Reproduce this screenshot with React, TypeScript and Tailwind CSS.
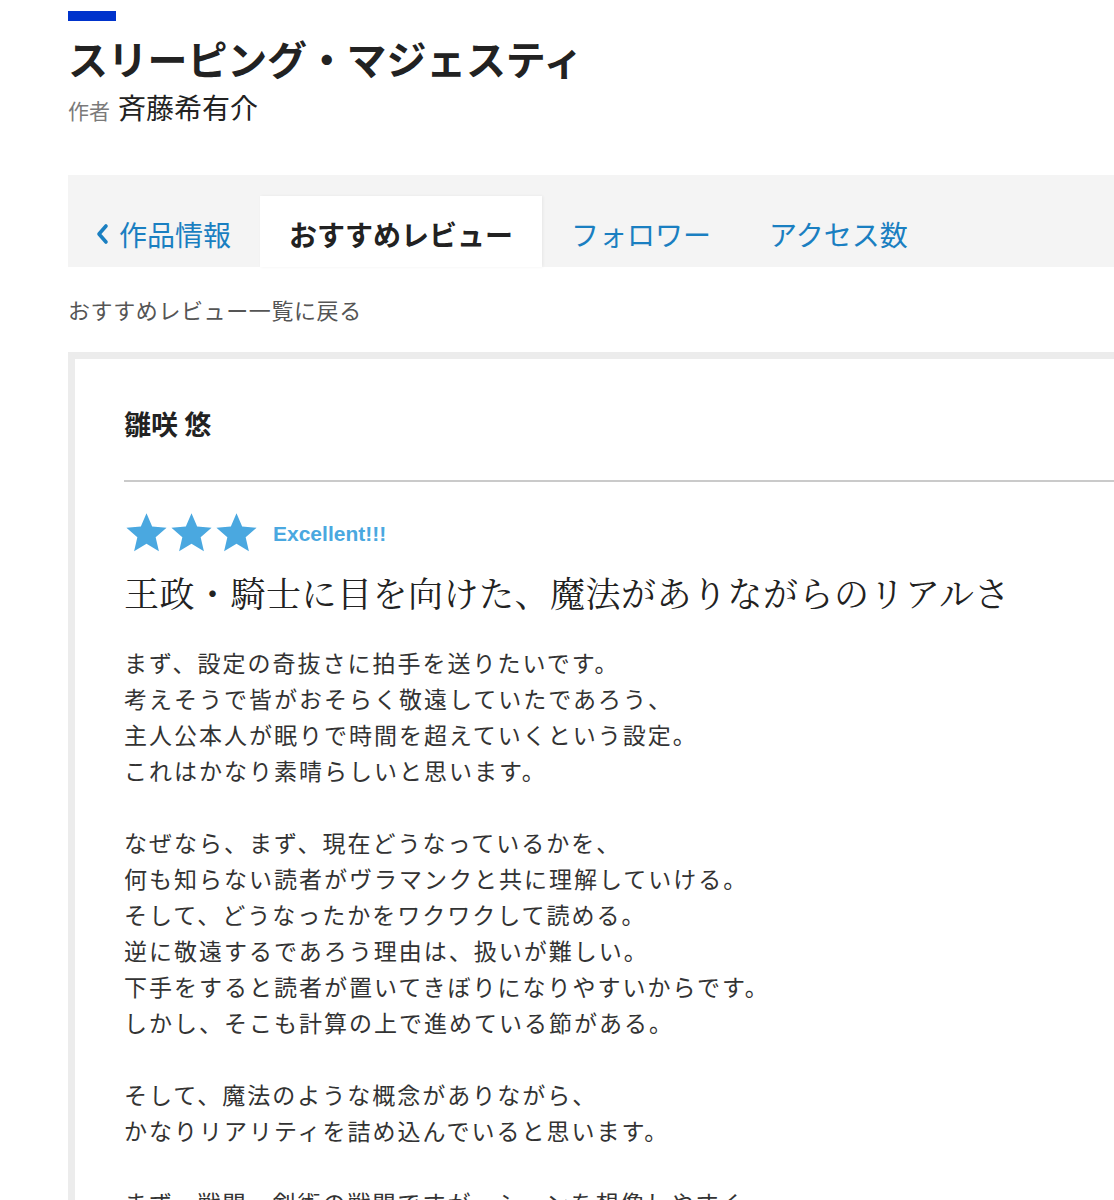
import React from "react";

const Star = () => (
  <svg width="45" height="44" viewBox="0 0 24 24" className="block">
    <path
      d="M12 1.2l3.09 7.26 7.86.68-5.96 5.17 1.78 7.69L12 17.92 5.23 22l1.78-7.69L1.05 9.14l7.86-.68z"
      fill="#4aa8e0"
    />
  </svg>
);

const paragraphs: string[][] = [
  [
    "まず、設定の奇抜さに拍手を送りたいです。",
    "考えそうで皆がおそらく敬遠していたであろう、",
    "主人公本人が眠りで時間を超えていくという設定。",
    "これはかなり素晴らしいと思います。",
  ],
  [
    "なぜなら、まず、現在どうなっているかを、",
    "何も知らない読者がヴラマンクと共に理解していける。",
    "そして、どうなったかをワクワクして読める。",
    "逆に敬遠するであろう理由は、扱いが難しい。",
    "下手をすると読者が置いてきぼりになりやすいからです。",
    "しかし、そこも計算の上で進めている節がある。",
  ],
  [
    "そして、魔法のような概念がありながら、",
    "かなりリアリティを詰め込んでいると思います。",
  ],
  ["まず、戦闘、剣術の戦闘ですが、シーンを想像しやすく"],
];

export default function App() {
  const sans = "font-['Noto_Sans_CJK_JP','Noto_Sans',sans-serif]";
  return (
    <div className={`min-h-[1200px] bg-white text-[#222] ${sans} overflow-hidden`}>
      <div className="pl-[68px]">
        {/* header */}
        <div className="pt-[11px]">
          <div className="w-[48px] h-[10px] bg-[#0033cc]" />
          <h1 className="mt-[13px] text-[40px] leading-[48px] font-bold text-[#222] tracking-[-0.2px]">
            スリーピング・マジェスティ
          </h1>
          <div className="mt-[4px] flex items-baseline h-[36px]">
            <span className="text-[21px] text-[#7a7a7a]">作者</span>
            <span className="ml-[8px] text-[28px] text-[#222]">斉藤希有介</span>
          </div>
        </div>

        {/* tabs */}
        <div className="mt-[53px] bg-[#f4f4f4] h-[92px] flex items-end">
          <div className="flex h-[71px]">
            <div className="flex items-center pl-[26px] pr-[29px] pt-[5px] text-[28px] text-[#1a7fc1]">
              <svg width="16" height="24" viewBox="0 0 16 24" className="mr-[9px]">
                <path d="M12 4L5 12l7 8" stroke="#1a7fc1" strokeWidth="3.6" fill="none" strokeLinecap="round" strokeLinejoin="round" />
              </svg>
              作品情報
            </div>
            <div className="flex items-center px-[29px] pt-[5px] bg-white text-[28px] font-bold text-[#222] shadow-[1px_0_3px_rgba(0,0,0,0.06)]">
              おすすめレビュー
            </div>
            <div className="flex items-center px-[29px] pt-[5px] text-[28px] text-[#1a7fc1]">
              フォロワー
            </div>
            <div className="flex items-center px-[29px] pt-[5px] text-[28px] text-[#1a7fc1]">
              アクセス数
            </div>
          </div>
        </div>

        <div className="mt-[26px] text-[22px] leading-[32px] tracking-[0.6px] text-[#555]">
          おすすめレビュー一覧に戻る
        </div>

        {/* card */}
        <div className="mt-[27px] border-t-[7px] border-l-[7px] border-[#ececec] bg-white pl-[49px]">
          <div className="pt-[49px] pb-[40px] text-[27px] leading-[32px] font-bold text-[#222]">
            雛咲 悠
          </div>
          <div className="border-t-2 border-[#cacaca]" />
          <div className="mt-[29px] flex items-center">
            <Star />
            <Star />
            <Star />
            <span className="ml-[14px] mt-[2px] text-[21px] font-bold text-[#4aa8e0] font-['Liberation_Sans',sans-serif]">
              Excellent!!!
            </span>
          </div>
          <h2 className="mt-[12px] text-[35px] leading-[50px] text-[#222] tracking-[0.5px] font-['Noto_Serif_CJK_JP','Noto_Serif_CJK_SC','Noto_Sans_CJK_JP',serif]">
            王政・騎士に目を向けた、魔法がありながらのリアルさ
          </h2>
          <div className="mt-[27px] text-[23px] leading-[36px] tracking-[2px] text-[#333]">
            {paragraphs.map((p, i) => (
              <div key={i} className={i > 0 ? "mt-[36px]" : ""}>
                {p.map((l, j) => (
                  <div key={j}>{l}</div>
                ))}
              </div>
            ))}
          </div>
        </div>
      </div>
    </div>
  );
}
